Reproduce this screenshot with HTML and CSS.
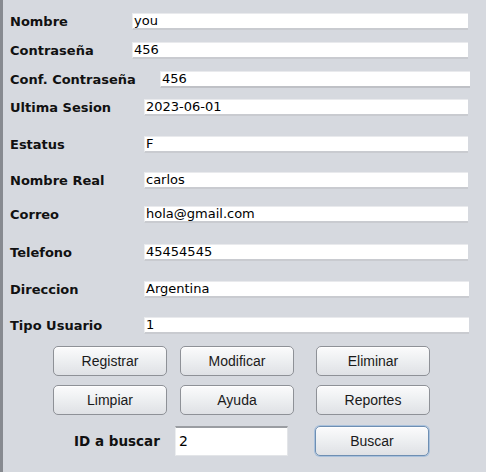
FILE: index.html
```html
<!DOCTYPE html>
<html>
<head>
<meta charset="utf-8">
<link rel="stylesheet" href="styles.css">
</head>
<body>
<div class="window">
  <div class="form">
    <label class="lbl">Nombre</label><div class="field">you</div>
    <label class="lbl">Contraseña</label><div class="field">456</div>
    <label class="lbl">Conf. Contraseña</label><div class="field f-conf">456</div>
    <label class="lbl">Ultima Sesion</label><div class="field f-mid">2023-06-01</div>
    <label class="lbl">Estatus</label><div class="field f-mid">F</div>
    <label class="lbl">Nombre Real</label><div class="field f-mid">carlos</div>
    <label class="lbl">Correo</label><div class="field f-mid">hola@gmail.com</div>
    <label class="lbl">Telefono</label><div class="field f-mid">45454545</div>
    <label class="lbl">Direccion</label><div class="field f-mid f-wide">Argentina</div>
    <label class="lbl">Tipo Usuario</label><div class="field f-mid f-wide">1</div>
  </div>
  <div class="buttons">
    <button class="btn">Registrar</button>
    <button class="btn">Modificar</button>
    <button class="btn">Eliminar</button>
    <button class="btn">Limpiar</button>
    <button class="btn">Ayuda</button>
    <button class="btn">Reportes</button>
  </div>
  <div class="search">
    <span class="lbl search-lbl">ID a buscar</span>
    <div class="field id-field">2</div>
    <button class="btn btn-focus">Buscar</button>
  </div>
</div>
</body>
</html>
```

FILE: styles.css
```css
html, body {
  margin: 0;
  padding: 0;
  background: #d6d9df;
}
.window {
  width: 486px;
  height: 472px;
  box-sizing: border-box;
  border-left: 3px solid #878a90;
  background: #d6d9df;
  overflow: hidden;
}
.form {
  display: grid;
  grid-template-columns: 122px 336px;
  grid-template-rows: 29px 29px 28px 37px 36px 34px 38px 37px 36px 29px;
  padding-top: 13px;
  padding-left: 7px;
}
.lbl {
  font-family: "DejaVu Sans", sans-serif;
  font-weight: bold;
  font-size: 13px;
  color: #111;
  line-height: 17px;
  height: 17px;
  white-space: nowrap;
}
.field {
  box-sizing: border-box;
  height: 17px;
  background: #fff;
  border-top: 1px solid #e9eaed;
  border-left: 1px solid #eceef0;
  border-bottom: 2px solid #c9cbd0;
  font-family: "DejaVu Sans", sans-serif;
  font-size: 13px;
  line-height: 14px;
  color: #000;
  padding-left: 1px;
  white-space: nowrap;
}
.f-conf {
  margin-left: 28px;
  width: 310px;
  border-bottom-color: #bfc1c6;
}
.f-mid {
  margin-left: 12px;
  width: 324px;
}
.f-wide {
  width: 325px;
}
.buttons {
  display: grid;
  grid-template-columns: 127px 136px 114px;
  row-gap: 9px;
  padding-left: 50px;
  margin-top: 0;
}
.btn {
  box-sizing: border-box;
  width: 114px;
  height: 30px;
  border: 1px solid #8e9197;
  border-radius: 5px;
  background: linear-gradient(#fbfbfc 0%, #eef0f2 45%, #dfe1e5 100%);
  box-shadow: inset 0 1px 0 #ffffff;
  font-family: "Liberation Sans", Arial, sans-serif;
  font-size: 14px;
  color: #1a1a1a;
  padding: 0;
  margin: 0;
}
.search {
  display: flex;
  align-items: center;
  padding-left: 71px;
  margin-top: 11px;
}
.search-lbl {
  width: 101px;
  font-size: 13.5px;
}
.id-field {
  width: 113px;
  height: 30px;
  border-top: 2px solid #9a9da2;
  border-bottom: 1px solid #e3e5e8;
  border-right: 1px solid #e3e5e8;
  font-size: 14px;
  line-height: 26px;
  padding-left: 3px;
}
.btn-focus {
  margin-left: 27px;
  border-color: #6e8fb3;
  box-shadow: 0 0 0 1px #a9c1dc, inset 0 1px 0 #ffffff;
}
```
